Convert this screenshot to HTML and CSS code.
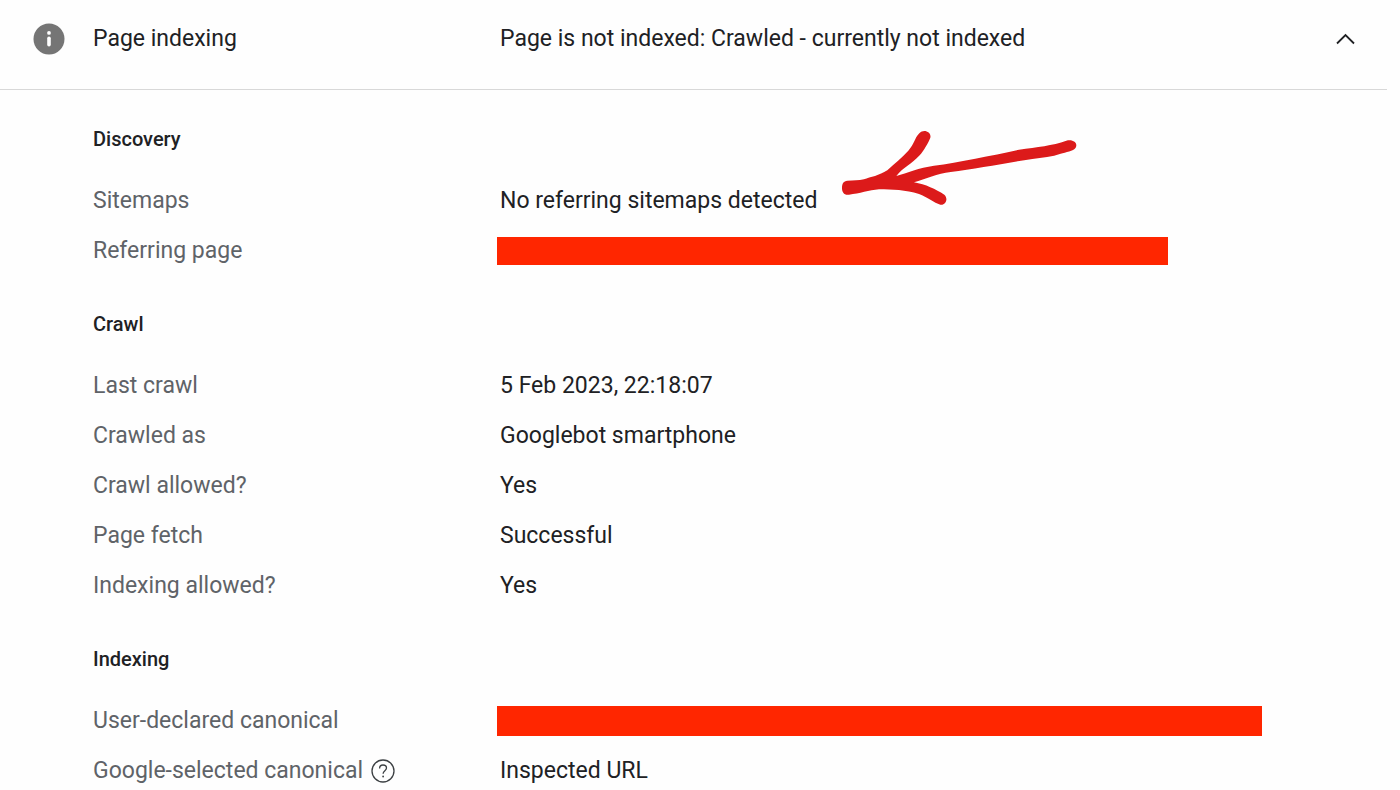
FILE: index.html
```
<!DOCTYPE html>
<html lang="en">
<head>
  <meta charset="UTF-8" />
  <meta name="viewport" content="width=device-width, initial-scale=1.0"/>
  <title>Page indexing</title>
  <link rel="stylesheet" href="styles.css">
</head>
<body>
  <main class="panel">
    <button class="panel-header" type="button" aria-expanded="true" aria-controls="details">
      <svg class="info-icon" viewBox="0 0 32 32" aria-hidden="true">
        <circle cx="16" cy="16" r="15.5" fill="#757575"/>
        <circle cx="16" cy="9.900" r="1.900" fill="#fff"/>
        <path d="M16 15.200v6.600" stroke="#fff" stroke-width="3.600" stroke-linecap="round"/>
      </svg>
      <span class="panel-title">Page indexing</span>
      <span class="panel-status">Page is not indexed: Crawled - currently not indexed</span>
      <svg class="chevron" viewBox="0 0 20 12" aria-hidden="true">
        <path d="M2 10.500L10.500 2l8.500 8.500" fill="none" stroke="#202124" stroke-width="1.800"/>
      </svg>
    </button>

    <div class="details" id="details">
      <section class="group">
        <h2>Discovery</h2>
        <dl>
          <div class="row">
            <dt>Sitemaps</dt>
            <dd>
              <span class="marked">No referring sitemaps detected
                <!-- hand drawn arrow -->
                <svg class="arrow" viewBox="60 60 720 240" aria-hidden="true">
                  <path fill="#dc1a1a" d="M85 215C105 214 118 215 135 211C155 204 180 200 205 184C225 165 250 145 268 125C287 104 285 90 301 73C315 58 338 70 334 86C328 101 315 124 302 139C278 166 252 175 232 201C265 192 300 176 345 170C420 160 520 139 600 122C655 114 700 110 742 95C765 90 777 104 770 116C763 127 740 129 725 134C700 143 670 146 640 150C560 161 470 180 395 189C355 194 320 210 285 220C320 226 350 241 376 257C389 269 380 290 364 287C345 282 325 264 300 255C260 243 220 241 180 241C150 243 122 254 90 257C75 259 69 250 69 237C69 223 74 216 85 215Z"/>
                </svg>
              </span>
            </dd>
          </div>
          <div class="row">
            <dt>Referring page</dt>
            <dd><span class="redacted redacted-page"></span></dd>
          </div>
        </dl>
      </section>

      <section class="group">
        <h2>Crawl</h2>
        <dl>
          <div class="row">
            <dt>Last crawl</dt>
            <dd>5 Feb 2023, 22:18:07</dd>
          </div>
          <div class="row">
            <dt>Crawled as</dt>
            <dd>Googlebot smartphone</dd>
          </div>
          <div class="row">
            <dt>Crawl allowed?</dt>
            <dd>Yes</dd>
          </div>
          <div class="row">
            <dt>Page fetch</dt>
            <dd>Successful</dd>
          </div>
          <div class="row">
            <dt>Indexing allowed?</dt>
            <dd>Yes</dd>
          </div>
        </dl>
      </section>

      <section class="group">
        <h2>Indexing</h2>
        <dl>
          <div class="row">
            <dt>User-declared canonical</dt>
            <dd><span class="redacted redacted-canonical"></span></dd>
          </div>
          <div class="row">
            <dt>
              Google-selected canonical
              <button class="help" type="button" aria-label="Help">
                <svg viewBox="0 0 24 24" aria-hidden="true">
                  <circle cx="12" cy="12" r="11" fill="none" stroke="#3c4043" stroke-width="1.300"/>
                  <path d="M8.600 9.400C8.600 7.300 10 6 12 6s3.500 1.300 3.500 3.100c0 2.500-3.400 2.900-3.400 5.700" fill="none" stroke="#3c4043" stroke-width="1.300"/>
                  <circle cx="12.100" cy="17.500" r="0.900" fill="#3c4043"/>
                </svg>
              </button>
            </dt>
            <dd>Inspected URL</dd>
          </div>
        </dl>
      </section>
    </div>
  </main>
</body>
</html>
```
FILE: styles.css
```
* {
  box-sizing: border-box;
}

body {
  margin: 0;
  background-color: #fefefe;
  color: #202124;
  font-family: Roboto, sans-serif;
  font-size: 23px;
  line-height: 28px;
}

.panel-header {
  display: grid;
  grid-template-columns: 60px 407px 1fr auto;
  align-items: center;
  width: calc(100% - 13px);
  min-height: 90px;
  padding: 0 32px 11px 33px;
  border: 0;
  border-bottom: 1px solid #d8d8d8;
  background: none;
  color: inherit;
  font: inherit;
  text-align: left;
  cursor: pointer;
}

.info-icon {
  width: 32px;
  height: 32px;
}

.chevron {
  width: 20px;
  height: 12px;
}

.details {
  padding: 35px 32px 0 93px;
}

.group {
  margin-bottom: 34px;
}

.group:last-child {
  margin-bottom: 0;
}

.group h2 {
  margin: 0 0 23px;
  font-size: 20px;
  font-weight: 500;
  line-height: 28px;
}

.group dl {
  margin: 0;
}

.row {
  display: grid;
  grid-template-columns: 407px 1fr;
  align-items: center;
  height: 50px;
}

.row dt {
  display: flex;
  align-items: center;
  gap: 8px;
  color: #5f6368;
}

.row dd {
  margin: 0;
}

.marked {
  position: relative;
}

/* drawn over the value, starts just past its last letter */
.arrow {
  position: absolute;
  left: 100%;
  bottom: 5px;
  width: 240px;
  height: 80px;
  margin-left: 22px;
}

.redacted {
  display: block;
  width: 100%;
  height: 28px;
  margin-left: -3px;
  background-color: #ff2600;
}

.redacted-page {
  max-width: 671px;
}

.redacted-canonical {
  max-width: 765px;
  height: 30px;
}

.help {
  display: flex;
  padding: 0;
  border: 0;
  background: none;
  cursor: pointer;
}

.help svg {
  width: 24px;
  height: 24px;
}
```
